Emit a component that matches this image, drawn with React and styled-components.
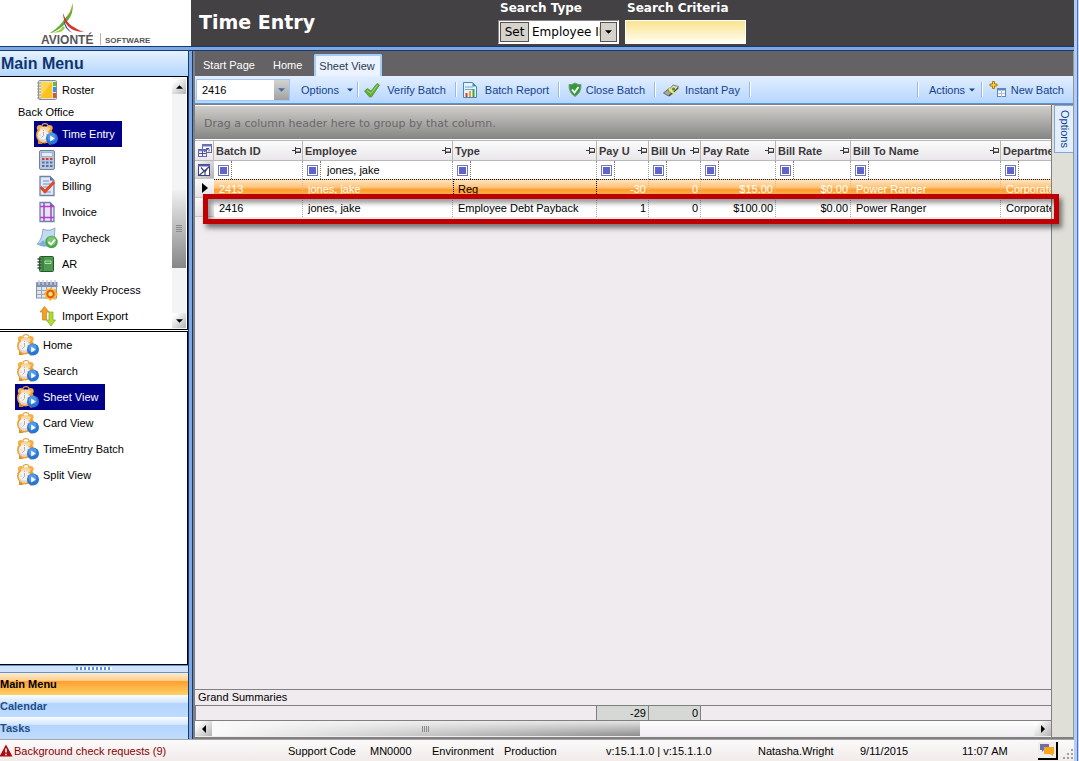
import React from "react";
import styled, { createGlobalStyle, css } from "styled-components";

const sans = '"Liberation Sans", Arial, sans-serif';
const wide = '"DejaVu Sans", Verdana, sans-serif';

const Global = createGlobalStyle`
  * { box-sizing: border-box; }
  body { margin: 0; background: #ffffff; font: 11px/14px ${sans}; color: #000000; }
  button, input, select { font: inherit; color: inherit; margin: 0; padding: 0; border: 0; background: none; border-radius: 0; }
  button { cursor: pointer; white-space: nowrap; }
  svg { display: block; flex: none; }
`;

/* ---------- window ---------- */
const Window = styled.div`
  display: flex;
  flex-direction: column;
  min-height: 100vh;
  border-right: 1px solid #c9d6ea;
`;
const Frame = styled.div`
  flex: 1;
  display: flex;
  flex-direction: column;
  border-right: 1px solid #4a76b8;
`;
const Inner = styled.div`
  flex: 1;
  display: flex;
  flex-direction: column;
  min-width: 0;
  border-right: 3px solid #b1ccf6;
`;
const Header = styled.header`
  display: flex;
  height: 46px;
  background: #434143;
`;
const LogoBox = styled.div`
  width: 191px;
  flex: none;
  background: #ffffff;
  padding-left: 38px;
`;
const Title = styled.h1`
  width: 307px;
  flex: none;
  margin: 0;
  padding: 9px 0 0 8px;
  font: bold 19px/26px ${wide};
  color: #ffffff;
`;
const SearchGroup = styled.div`
  width: ${(p) => p.$w}px;
  margin-right: 6px;
  color: #ffffff;
  font: bold 12px/16px ${wide};
`;
const SearchLabel = styled.label`
  display: block;
  padding-left: 2px;
  height: 20px;
`;
const TypeBox = styled.div`
  position: relative;
  display: flex;
  height: 24px;
  padding: 1px;
  border: 1px solid #8a8886;
  border-right-color: #ffffff;
  border-bottom-color: #ffffff;
  background: #ffffff;
  font: 12px/18px ${wide};
  color: #000000;
`;
const SetButton = styled.button`
  width: 29px;
  flex: none;
  background: #d6d2cc;
  border: 1px solid #56534f;
`;
const TypeSelect = styled.select`
  appearance: none;
  flex: none;
  width: 71px;
  padding-left: 3px;
  overflow: hidden;
  text-overflow: clip;
`;
const DropFace = styled.span`
  display: flex;
  flex: 1;
  align-items: center;
  justify-content: center;
  background: #d6d2cc;
  border: 1px solid #56534f;
`;
const Criteria = styled.input`
  display: block;
  width: 100%;
  height: 24px;
  padding: 0 4px;
  border: 1px solid #ffffff;
  background: linear-gradient(#f9e48f, #fffdf2);
`;
const BlueBar = styled.div`
  height: 5px;
  background: #7fa8e2;
  border-top: 1px solid #153a78;
  border-bottom: 1px solid #153a78;
`;
const Body = styled.div`
  flex: 1;
  display: flex;
  min-width: 0;
`;
const VBar = styled.div`
  width: 5px;
  flex: none;
  background: #7fa8e2;
  border-left: 1px solid #153a78;
  border-right: 1px solid #153a78;
`;

/* ---------- sidebar ---------- */
const Side = styled.aside`
  width: 188px;
  flex: none;
  display: flex;
  flex-direction: column;
`;
const SideTitle = styled.h2`
  margin: 0;
  height: 25px;
  font: bold 16px/25px ${sans};
  color: #0f3470;
  padding-left: 1px;
  background: linear-gradient(#e6f1ff, #b4d6fd);
`;
const TreeBox = styled.div`
  display: flex;
  height: 254px;
  border: 1px solid #000;
  border-left: 0;
`;
const TreeList = styled.div`
  flex: 1;
  display: flex;
  flex-direction: column;
  align-items: flex-start;
  padding-left: ${(p) => p.$indent}px;
`;
const GroupLabel = styled.div`
  height: 18px;
  line-height: 18px;
  margin-left: -16px;
`;
const NavItem = styled.button`
  display: flex;
  align-items: center;
  gap: 4px;
  height: 26px;
  padding: 0 7px 0 2px;
  ${(p) =>
    p.$active &&
    css`
      background: #00008b;
      color: #ffffff;
    `}
`;
const VScroll = styled.div`
  width: 14px;
  flex: none;
  margin-right: 1px;
  display: flex;
  flex-direction: column;
  padding: 2px 0 1px;
  background: #f5f4f5;
`;
const ScrollButton = styled.button`
  display: flex;
  align-items: center;
  justify-content: center;
  width: ${(p) => p.$w}px;
  height: 15px;
  flex: none;
  background: linear-gradient(135deg, #ffffff 15%, #b4b4b4);
`;
const VThumb = styled.div`
  margin: 96px 0 auto;
  height: 78px;
  display: flex;
  align-items: center;
  justify-content: center;
  background: linear-gradient(#f0f0f0, #868686);
`;
const ViewBox = styled.div`
  flex: 1;
  margin-top: 1px;
  border: 1px solid #000;
  border-left: 0;
`;
const Splitter = styled.div`
  height: 8px;
  border-top: 1px solid #5b92d8;
  border-bottom: 1px solid #5b92d8;
  background: #cfe3fc;
  display: flex;
  justify-content: center;
  padding-top: 1px;
`;
const Dots = styled.span`
  width: 36px;
  height: 3px;
  background: repeating-linear-gradient(90deg, #5b92d8 0 2px, #ffffff 2px 4px);
`;
const PanelButton = styled.button`
  height: 22px;
  text-align: left;
  font-weight: bold;
  line-height: 22px;
  color: ${(p) => (p.$active ? "#000000" : "#204d89")};
  background: ${(p) =>
    p.$active
      ? "linear-gradient(#ffeccb, #ffce8f 34%, #ff9f2e 36%, #ffd068)"
      : "linear-gradient(#fafdff, #d3e6ff 34%, #b4d4fd 36%, #bfdcff)"};
`;

/* ---------- main area ---------- */
const Main = styled.main`
  flex: 1;
  min-width: 0;
  display: flex;
  flex-direction: column;
  border-left: 2px solid #808080;
  border-right: 1px solid #98968f;
  border-bottom: 2px solid #808080;
`;
const Tabs = styled.nav`
  display: flex;
  align-items: flex-end;
  height: 25px;
  padding-left: 1px;
  background: #646264;
`;
const Tab = styled.button`
  height: 22px;
  padding: 0 ${(p) => p.$r}px 0 ${(p) => p.$l}px;
  color: #ffffff;
  ${(p) =>
    p.$active &&
    css`
      background: #eaf3ff;
      border: 2px solid #a5cbf9;
      border-bottom: 0;
      border-radius: 2px 2px 0 0;
      color: #2b3950;
    `}
`;
const Toolbar = styled.div`
  display: flex;
  align-items: center;
  height: 28px;
  padding-left: 1px;
  border-bottom: 1px solid #5b92d8;
  background: linear-gradient(#e2eeff, #b6d6ff);
`;
const Combo = styled.div`
  width: 94px;
  height: 22px;
  display: flex;
  border: 1px solid #a3c5f3;
  background: #ffffff;
`;
const ComboSelect = styled.select`
  appearance: none;
  flex: 1;
  min-width: 0;
  padding-left: 5px;
`;
const ComboArrow = styled.span`
  width: 15px;
  display: flex;
  align-items: center;
  justify-content: center;
  background: linear-gradient(#d3d3d3, #a2a2a2);
`;
const Tool = styled.button`
  display: flex;
  align-items: center;
  justify-content: space-between;
  width: ${(p) => p.$w}px;
  padding: 0 ${(p) => p.$pr || 9}px 0 ${(p) => p.$pl || 5}px;
  height: 24px;
  flex: none;
  color: #15428b;
`;
const Sep = styled.span`
  width: 2px;
  height: 15px;
  flex: none;
  border-left: 1px solid #95b9ea;
  border-right: 1px solid #ffffff;
  ${(p) => p.$push && "margin-left: auto;"}
`;
const Work = styled.div`
  flex: 1;
  display: flex;
  min-width: 0;
  background: #dfdfd8;
  border-top: 1px solid #808080;
`;
const GridPane = styled.section`
  position: relative;
  flex: 1;
  min-width: 0;
  display: flex;
  flex-direction: column;
  border-right: 1px solid #808080;
  background: #efebef;
`;
const GroupBy = styled.div`
  height: 35px;
  padding-left: 9px;
  border-top: 1px solid #ffffff;
  border-bottom: 1px solid #ffffff;
  font: 11px/36px ${wide};
  color: #6a6868;
  background: linear-gradient(#d0ceca, #858585);
`;
const TableClip = styled.div`
  flex: 1;
  overflow: hidden;
`;
const Table = styled.table`
  table-layout: fixed;
  width: 901px;
  border-collapse: separate;
  border-spacing: 0;
`;
const Th = styled.th`
  height: 21px;
  padding: 0 1px 0 2px;
  text-align: left;
  white-space: nowrap;
  overflow: hidden;
  color: #3d3a3d;
  border-top: 1px solid #b9b7b9;
  border-right: 1px solid #b9b7b9;
  border-bottom: 1px solid #b9b7b9;
  background: linear-gradient(#fbfbfb, #e9e7ea);
`;
const ThInner = styled.span`
  display: flex;
  align-items: center;
  justify-content: space-between;
`;
const Corner = styled.td`
  height: ${(p) => (p.$dark ? 18 : 19)}px;
  padding: 0 0 0 2px;
  background: ${(p) =>
    p.$dark ? "linear-gradient(135deg, #fbfbfb, #b4b2b6)" : "linear-gradient(#fbfbfb, #e4e2e5)"};
  border-bottom: 1px solid #c9c7c9;
`;
const FilterTd = styled.td`
  height: 18px;
  padding: 0;
  background: #ffffff;
  border-right: 1px dotted #9a9a9a;
`;
const FilterInner = styled.div`
  display: flex;
  align-items: center;
`;
const FilterButton = styled.button`
  width: 11px;
  height: 11px;
  margin: 0 2px 0 4px;
  flex: none;
  background: #5f63cf;
  border: 1px solid #7478ac;
  box-shadow: inset 0 0 0 1px #ffffff;
`;
const FilterInput = styled.input`
  flex: 1;
  min-width: 0;
  width: 10px;
  height: 18px;
  padding-left: 6px;
  border-left: 1px dotted #777777;
  white-space: nowrap;
`;
const Td = styled.td`
  height: 19px;
  padding: 0 ${(p) => (p.$num ? 2 : 5)}px;
  line-height: 14px;
  text-align: ${(p) => (p.$num ? "right" : "left")};
  white-space: nowrap;
  overflow: hidden;
  border-right: 1px dotted ${(p) => (p.$hot ? "#d8b98c" : "#a9a9a9")};
  color: ${(p) => (p.$hot && !p.$focus ? "#ffffff" : "#000000")};
  background: ${(p) =>
    p.$hot ? "linear-gradient(#ffe4bd, #ffc57c 40%, #ff9b2a 55%, #ffcb70)" : "#ffffff"};
  border-top: 1px dotted ${(p) => (p.$hot ? "#1b1b60" : "#c9c9c9")};
  outline: ${(p) => (p.$focus ? "1px dotted #000000" : "none")};
  outline-offset: -1px;
`;
const MarkerBox = styled.span`
  display: flex;
  padding-left: 5px;
`;
const Callout = styled.div`
  position: absolute;
  top: 89px;
  left: 8px;
  right: -8px;
  height: 30px;
  border: 5px solid #c00000;
  box-shadow: 3px 4px 5px rgba(0, 0, 0, 0.5), inset 3px 4px 5px rgba(0, 0, 0, 0.4);
  pointer-events: none;
`;
const SummaryTitle = styled.div`
  height: 17px;
  padding-left: 3px;
  line-height: 15px;
  border-top: 1px solid #808080;
  border-bottom: 1px solid #808080;
`;
const Summary = styled.div`
  display: flex;
  height: 15px;
  padding-left: 401px;
  border-bottom: 1px solid #808080;
  border-left: 1px solid #808080;
`;
const SumCell = styled.output`
  width: 52px;
  padding-right: 2px;
  text-align: right;
  background: #d5d8d5;
  border-right: 1px solid #808080;
  &:first-child { border-left: 1px solid #808080; width: 53px; margin-left: -1px; }
`;
const HScroll = styled.div`
  display: flex;
  height: 16px;
  padding-bottom: 1px;
  background: linear-gradient(#fdfdfd, #efedef);
`;
const HThumb = styled.div`
  width: 50%;
  display: flex;
  align-items: center;
  justify-content: center;
  margin-right: auto;
  background: linear-gradient(90deg, #fafafa, rgba(250, 250, 250, 0)), linear-gradient(#e4e4e4, #8c8c8c);
`;
const RightRail = styled.div`
  width: 21px;
  flex: none;
  padding-left: 2px;
`;
const RailTab = styled.button`
  width: 19px;
  height: 48px;
  writing-mode: vertical-rl;
  line-height: 17px;
  color: #15428b;
  background: #e3efff;
  border: 1px solid #7fa8e2;
  border-right: 0;
`;

/* ---------- status bar ---------- */
const Status = styled.footer`
  display: grid;
  grid-template-columns: 288fr 82fr 62fr 72fr 102fr 152fr 102fr 102fr 76fr 36px;
  align-items: center;
  height: 22px;
  border-top: 1px solid #a8a4a4;
  background: linear-gradient(#fbfafa, #f1ebea);
  white-space: nowrap;
`;
const Alert = styled.a`
  display: flex;
  align-items: center;
  gap: 1px;
  color: #8b0000;
  text-decoration: none;
`;
const Tray = styled.span`
  display: flex;
  align-items: flex-end;
  gap: 5px;
`;
const ChatButton = styled.button`
  width: 20px;
  height: 18px;
  padding-left: 1px;
  background: #f0ecea;
  border-right: 2px solid #000;
  border-bottom: 2px solid #000;
`;

/* ---------- drawings ---------- */
const Svg = ({ s = 20, h, v, children }) => (
  <svg width={s} height={h || s} viewBox={v || `0 0 ${s} ${h || s}`} aria-hidden="true">
    {children}
  </svg>
);
const Clock = () => (
  <Svg s={22}>
    <path d="M6 2.500C6.500 0 11.500 0 12 2.500" fill="none" stroke="#e0a54c" strokeWidth="1.300" />
    <ellipse cx="4" cy="5" rx="3.200" ry="3" fill="#f5b04a" />
    <ellipse cx="13.500" cy="5" rx="3.200" ry="3" fill="#f5b04a" />
    <path d="M2 17l0 4 5 0zM12 20l2 2 2-2z" fill="#dc8c22" />
    <ellipse cx="8.500" cy="12" rx="8.500" ry="8.500" fill="#f0a02f" />
    <path d="M3.500 5q5-3 10.500 0l-1 3h-8.500z" fill="#fbd79c" />
    <ellipse cx="7.500" cy="12.500" rx="6" ry="6.500" fill="#dedad3" />
    <ellipse cx="7" cy="11.500" rx="4.800" ry="5" fill="#f4f2ef" />
    <path d="M7.500 9v3.500l-2 2M7.500 7v1M3.500 12h1M10 12h1" fill="none" stroke="#b0a79c" strokeWidth="0.900" />
    <circle cx="16" cy="15.500" r="6" fill="#2a74d6" />
    <circle cx="15.500" cy="14" r="4" fill="#62a9f4" opacity="0.700" />
    <path d="M14.200 12.600v6l4.500-3z" fill="#ffffff" />
  </Svg>
);
const Roster = () => (
  <Svg s={22}>
    <rect x="2.500" y="1.500" width="18" height="19" rx="1" fill="#e2e2e2" stroke="#8c8c8c" />
    <rect x="5" y="3" width="11" height="16" fill="#ffc21c" />
    <path d="M5 3h11l-11 14z" fill="#ffe06a" opacity="0.700" />
    <rect x="17" y="3" width="3" height="4" fill="#6dbb3c" />
    <rect x="17" y="8" width="3" height="5" fill="#3d8fe0" />
    <rect x="17" y="14" width="3" height="5" fill="#e0552f" />
    <path d="M1 4h4M1 7h4M1 10h4M1 13h4M1 16h4M1 19h4" stroke="#999" />
  </Svg>
);
const Calc = () => (
  <Svg s={22}>
    <rect x="3.500" y="1.500" width="15" height="19" rx="1.500" fill="#b9c6dc" stroke="#6f80a5" />
    <rect x="5.500" y="3.500" width="11" height="4" fill="#dff0fb" stroke="#8795b4" strokeWidth="0.600" />
    <path d="M6 10h2.500M10 10h2.500M14 10h2.500" stroke="#d33a35" strokeWidth="2" />
    <path d="M6 13.500h2.500M10 13.500h2.500M14 13.500h2.500M6 17h2.500M10 17h2.500M14 17h2.500" stroke="#536fb0" strokeWidth="2" />
  </Svg>
);
const Page = ({ children }) => (
  <Svg s={22}>
    <path d="M4 1.500h10l4 4v15H4z" fill="#dfe8f8" stroke="#6f82a8" strokeWidth="1.300" />
    <path d="M14 1.500v4h4z" fill="#5a74a6" />
    {children}
  </Svg>
);
const Billing = () => (
  <Page>
    <path d="M7 6h6M7 9h8M7 12h8M7 17h8" stroke="#7890bb" />
    <path d="M4.500 12l4.500 4.500 9-9.500" fill="none" stroke="#e04a22" strokeWidth="3" />
  </Page>
);
const Invoice = () => (
  <Page>
    <path d="M8 2v18M15 4v16M4 5.500h14M4 16.500h14" fill="none" stroke="#b43cc0" strokeWidth="1.500" />
  </Page>
);
const Paycheck = () => (
  <Svg s={22}>
    <path d="M7 2q6 3 12-1l-1 13q-8 6-17 3q5-4 6-15z" fill="#bfdcf2" stroke="#7d9ab8" strokeWidth="0.800" />
    <path d="M1 17q4-1 6-4l6 6q-7 2-12-2z" fill="#7fb0dd" />
    <circle cx="15.500" cy="15" r="6.200" fill="#4ba546" />
    <circle cx="15.500" cy="14" r="4.500" fill="#7cc56f" />
    <path d="M12.500 15l2.500 2.500 4-5" fill="none" stroke="#fff" strokeWidth="1.800" />
  </Svg>
);
const Book = () => (
  <Svg s={22}>
    <rect x="3.500" y="3.500" width="14" height="15" rx="1" fill="#4d9a50" stroke="#225a28" />
    <path d="M9 8h6v2.500H9z" fill="none" stroke="#b6deae" />
    <path d="M1.500 6h4M1.500 9h4M1.500 12h4M1.500 15h4" stroke="#444" strokeWidth="1.300" />
    <path d="M7 4v14" stroke="#2b6a31" />
  </Svg>
);
const Calendar = () => (
  <Svg s={22}>
    <rect x="0.500" y="4" width="20" height="15" fill="#dfe4ee" stroke="#8492ad" />
    <rect x="0.500" y="3" width="21" height="5" fill="#8291b2" />
    <path d="M3 1v5M7 1v5M11 1v5M15 1v5M19 1v5" stroke="#c8d0e0" strokeWidth="1.400" />
    <path d="M1 11.500h19M1 15.500h19M5.500 8v11M10.500 8v11M15.500 8v11" stroke="#9aa6c0" />
    <path d="M15 8l2 2.500 3.500-0.500-0.500 3.500 2 2-2.500 2 0 3.500-3-1-2.500 2-2-2.500-3 0.500 0.500-3.500-2-2 2.500-2 0-3 3 0.500z" fill="#f9b529" />
    <circle cx="14.500" cy="15" r="3.200" fill="#fbe26b" stroke="#e4591c" strokeWidth="2" />
  </Svg>
);
const Swap = () => (
  <Svg s={22}>
    <path d="M8.500 1.500L13 7h-2.500v8h-4V7H4z" fill="#f2a127" stroke="#cf7d12" strokeWidth="0.700" />
    <path d="M15 21l4.500-6H17V7h-4v8h-2.500z" fill="#b4d93a" stroke="#7ba61f" strokeWidth="0.700" />
  </Svg>
);
const Tri = ({ d = "down", c = "#000", w = 7 }) => (
  <svg
    width={d === "down" || d === "up" ? w : 4}
    height={d === "down" || d === "up" ? 4 : 8}
    viewBox={d === "down" || d === "up" ? "0 0 8 4" : "0 0 4 8"}
    aria-hidden="true"
  >
    <path d={{ down: "M0 0h8l-4 4z", up: "M0 4h8l-4-4z", left: "M4 0v8l-4-4z", right: "M0 0v8l4-4z" }[d]} fill={c} />
  </svg>
);
const Pin = () => (
  <Svg s={9} h={9}>
    <path d="M0 4.500h3M3.500 1v7M3.500 2.500h5v4h-5" fill="none" stroke="#3d3a3d" />
    <path d="M4 6h5" stroke="#3d3a3d" />
  </Svg>
);
const Check = () => (
  <Svg s={16}>
    <path d="M0.500 9l3-2.500 3.500 2.500 6-7.500 2.500 1.500-8 12h-2z" fill="#5fae33" stroke="#4a8f2a" strokeWidth="0.700" />
    <path d="M3 8.500l4 3 6.500-8.500" fill="none" stroke="#a5dc6e" />
  </Svg>
);
const Report = () => (
  <Svg s={16}>
    <path d="M1.500 0.500h9l4 4v11h-13z" fill="#e4f4ff" stroke="#4d84b8" />
    <path d="M10.500 0.500v4h4z" fill="#4d84b8" />
    <path d="M3 5h8M3 7.500h9" stroke="#6aa5d6" />
    <path d="M4.500 15v-4" stroke="#df3b28" strokeWidth="2" />
    <path d="M8 15v-6" stroke="#f0a221" strokeWidth="2" />
    <path d="M11.500 15v-8" stroke="#41a33c" strokeWidth="2" />
  </Svg>
);
const Shield = () => (
  <Svg s={14} h={15}>
    <path d="M7 1q3 2 6 1.500q0.500 8-6 12q-6.500-4-6-12q3 0.500 6-1.500z" fill="#2f9b3c" stroke="#7f9a80" />
    <path d="M4 7.500l2.500 3 4-5.500" fill="none" stroke="#fff" strokeWidth="1.800" />
  </Svg>
);
const Money = () => (
  <Svg s={16}>
    <path d="M0.500 11l6-5 3 4-4 4z" fill="#a9a99a" stroke="#57584a" strokeWidth="0.800" />
    <path d="M5 9l5-6 5.500 1.500-6 7.500z" fill="#d5dcb4" stroke="#6c7355" strokeWidth="0.800" />
    <path d="M5.500 13.500l10-8.500v1.500l-9 8z" fill="#4c5340" />
    <path d="M6 6.500l5 5" stroke="#e5f04e" strokeWidth="2" />
    <circle cx="10.500" cy="7" r="1.600" fill="#5b8a36" />
  </Svg>
);
const NewIcon = () => (
  <Svg s={17}>
    <rect x="8.500" y="7.500" width="8" height="8" fill="#fff" stroke="#5d86c4" />
    <path d="M8 8.500h9" stroke="#5d86c4" strokeWidth="2" />
    <path d="M9 12.500h7M12.500 10v6" stroke="#a9c1e4" />
    <path d="M3.500 0.500h2v2.500h2.500v2h-2.500v2.500h-2v-2.500h-2.500v-2h2.500z" fill="#ffd43a" stroke="#ae7c0d" />
  </Svg>
);
const Chooser = () => (
  <Svg s={15} h={15}>
    <rect x="5.500" y="1.500" width="9" height="8" fill="#fff" stroke="#6266a8" />
    <path d="M5 2.500h10" stroke="#6c70bd" strokeWidth="2" />
    <rect x="1.500" y="6.500" width="8" height="7" fill="#f0f0fb" stroke="#6266a8" />
    <path d="M1 7.500h9" stroke="#6c70bd" strokeWidth="1.500" />
    <path d="M2 10.500h7M5.500 8v5M7 9l4-3M12 8.500V5.500H9" fill="none" stroke="#4b4f96" />
  </Svg>
);
const FilterIcon = () => (
  <Svg s={14} h={14}>
    <rect x="1.500" y="1.500" width="11" height="11" fill="#fff" stroke="#3b3f7c" />
    <path d="M1 2.500h12" stroke="#5a5ea8" strokeWidth="2" />
    <path d="M2 12.500l10.500-9M4 4.500l3 3.500M10 6l-2 3v3" fill="none" stroke="#3b3f7c" strokeWidth="1.200" />
  </Svg>
);
const Warn = () => (
  <Svg s={13} h={13}>
    <path d="M6 0.500L12.500 12.500h-13z" fill="#a80d12" />
    <path d="M6 4.500v4M6 9.800v1.500" stroke="#fff" strokeWidth="1.500" />
  </Svg>
);
const LogoText = styled.text`
  font: bold ${(p) => p.$size}px ${sans};
  fill: #57555a;
`;
const Logo = () => (
  <svg width="120" height="46" viewBox="0 0 120 46" role="img" aria-label="Avionté Software">
    <path d="M34.500 3q1.500 10-5 18q-5 7-16 12q-2 0 0-1q9-6 13-13q7-7 8-16z" fill="#5cad3c" />
    <path d="M34.500 3q0 7-4 12l-2 2q5-6 6-14z" fill="#f0b32b" />
    <path d="M25 13q3 9 9 13q6 4 12 6q-12 0-17-7q-4-5-4-12z" fill="#d8352c" />
    <path d="M26 20q2 9 9 13q-9-3-9-13z" fill="#25407e" />
    <path d="M14 32q8 0 11-6l2 2q-4 6-13 4z" fill="#a6c63b" />
    <LogoText x="3" y="44" $size={12}>AVIONTÉ</LogoText>
    <path d="M62.500 33v12" stroke="#b5b3b6" />
    <LogoText x="67" y="43" $size={8}>SOFTWARE</LogoText>
  </svg>
);
const Chat = () => (
  <Svg s={16} h={15}>
    <path d="M1 2h9v6h-5l-2 2v-2h-2z" fill="#6d6ea8" />
    <path d="M5 5h10v7h-1v2l-3-2h-6z" fill="#f8a51b" />
  </Svg>
);
const Grip = () => (
  <Svg s={11} h={11}>
    <path d="M8 1h2M8 5h2M8 9h2M4 5h2M4 9h2M0 9h2" stroke="#a39f9f" strokeWidth="2" />
  </Svg>
);
const Marker = () => (
  <MarkerBox>
    <Svg s={6} h={10}>
      <path d="M0 0v10l6-5z" fill="#000" />
    </Svg>
  </MarkerBox>
);

/* ---------- data ---------- */
const tree = [
  ["Time Entry", Clock],
  ["Payroll", Calc],
  ["Billing", Billing],
  ["Invoice", Invoice],
  ["Paycheck", Paycheck],
  ["AR", Book],
  ["Weekly Process", Calendar],
  ["Import Export", Swap],
];
const views = ["Home", "Search", "Sheet View", "Card View", "TimeEntry Batch", "Split View"];
const columns = [
  ["Batch ID", 89],
  ["Employee", 150],
  ["Type", 144],
  ["Pay U", 52],
  ["Bill Un", 52],
  ["Pay Rate", 75],
  ["Bill Rate", 75],
  ["Bill To Name", 150],
  ["Department", 95],
];
const rows = [
  ["2413", "jones, jake", "Reg", "-30", "0", "$15.00", "$0.00", "Power Ranger", "Corporate"],
  ["2416", "jones, jake", "Employee Debt Payback", "1", "0", "$100.00", "$0.00", "Power Ranger", "Corporate"],
];

export default function App() {
  return (
    <Window>
      <Global />
      <Frame>
        <Inner>
          <Header>
            <LogoBox>
              <Logo />
            </LogoBox>
            <Title>Time Entry</Title>
            <SearchGroup $w={121}>
              <SearchLabel htmlFor="stype">Search Type</SearchLabel>
              <TypeBox>
                <SetButton type="button">Set</SetButton>
                <TypeSelect id="stype">
                  <option>Employee ID</option>
                </TypeSelect>
                <DropFace>
                  <Tri />
                </DropFace>
              </TypeBox>
            </SearchGroup>
            <SearchGroup $w={121}>
              <SearchLabel htmlFor="scrit">Search Criteria</SearchLabel>
              <Criteria id="scrit" />
            </SearchGroup>
          </Header>
          <BlueBar />
          <Body>
            <Side>
              <SideTitle>Main Menu</SideTitle>
              <TreeBox>
                <TreeList $indent={34}>
                  <NavItem>
                    <Roster />
                    Roster
                  </NavItem>
                  <GroupLabel>Back Office</GroupLabel>
                  {tree.map(([name, Icon], i) => (
                    <NavItem key={name} $active={i === 0}>
                      <Icon />
                      {name}
                    </NavItem>
                  ))}
                </TreeList>
                <VScroll>
                  <ScrollButton $w={14} aria-label="Scroll up">
                    <Tri d="up" />
                  </ScrollButton>
                  <VThumb>
                    <Svg s={6} h={8}>
                      <path d="M0 0.500h6M0 2.500h6M0 4.500h6M0 6.500h6" stroke="#8a8a8a" />
                    </Svg>
                  </VThumb>
                  <ScrollButton $w={14} aria-label="Scroll down">
                    <Tri />
                  </ScrollButton>
                </VScroll>
              </TreeBox>
              <ViewBox>
                <TreeList $indent={15}>
                  {views.map((name) => (
                    <NavItem key={name} $active={name === "Sheet View"}>
                      <Clock />
                      {name}
                    </NavItem>
                  ))}
                </TreeList>
              </ViewBox>
              <Splitter>
                <Dots />
              </Splitter>
              <PanelButton $active>Main Menu</PanelButton>
              <PanelButton>Calendar</PanelButton>
              <PanelButton>Tasks</PanelButton>
            </Side>
            <VBar />
            <Main>
              <Tabs>
                <Tab $l={7} $r={9}>Start Page</Tab>
                <Tab $l={9} $r={12}>Home</Tab>
                <Tab $l={3} $r={5} $active>
                  Sheet View
                </Tab>
              </Tabs>
              <Toolbar>
                <Combo>
                  <ComboSelect aria-label="Batch">
                    <option>2416</option>
                  </ComboSelect>
                  <ComboArrow>
                    <Tri c="#3c6ea8" />
                  </ComboArrow>
                </Combo>
                <Tool $w={67} $pl={11} $pr={4}>
                  Options <Tri c="#15428b" w={6} />
                </Tool>
                <Sep />
                <Tool $w={96}>
                  <Check />
                  Verify Batch
                </Tool>
                <Sep />
                <Tool $w={101}>
                  <Report />
                  Batch Report
                </Tool>
                <Sep />
                <Tool $w={94} $pl={8}>
                  <Shield />
                  Close Batch
                </Tool>
                <Sep />
                <Tool $w={93} $pl={7}>
                  <Money />
                  Instant Pay
                </Tool>
                <Sep />
                <Sep $push />
                <Tool $w={62} $pl={10} $pr={6}>
                  Actions <Tri c="#15428b" w={6} />
                </Tool>
                <Sep />
                <Tool $w={90} $pl={6}>
                  <NewIcon />
                  New Batch
                </Tool>
              </Toolbar>
              <Work>
                <GridPane>
                  <GroupBy>Drag a column header here to group by that column.</GroupBy>
                  <TableClip>
                    <Table>
                      <colgroup>
                        <col style={{ width: 19 }} />
                        {columns.map(([name, w]) => (
                          <col key={name} style={{ width: w }} />
                        ))}
                      </colgroup>
                      <thead>
                        <tr>
                          <Th aria-label="Column chooser">
                            <Chooser />
                          </Th>
                          {columns.map(([name]) => (
                            <Th key={name}>
                              <ThInner>
                                {name}
                                <Pin />
                              </ThInner>
                            </Th>
                          ))}
                        </tr>
                      </thead>
                      <tbody>
                        <tr>
                          <Corner $dark>
                            <FilterIcon />
                          </Corner>
                          {columns.map(([name]) => (
                            <FilterTd key={name}>
                              <FilterInner>
                                <FilterButton aria-label={`${name} operator`} />
                                <FilterInput
                                  aria-label={`${name} filter`}
                                  defaultValue={name === "Employee" ? "jones, jake" : ""}
                                />
                              </FilterInner>
                            </FilterTd>
                          ))}
                        </tr>
                        {rows.map((row, r) => (
                          <tr key={row[0]}>
                            <Corner>{r === 0 && <Marker />}</Corner>
                            {row.map((cell, c) => (
                              <Td key={c} $hot={r === 0} $focus={r === 0 && c === 2} $num={c > 2 && c < 7}>
                                {cell}
                              </Td>
                            ))}
                          </tr>
                        ))}
                      </tbody>
                    </Table>
                  </TableClip>
                  <SummaryTitle>Grand Summaries</SummaryTitle>
                  <Summary>
                    <SumCell>-29</SumCell>
                    <SumCell>0</SumCell>
                  </Summary>
                  <HScroll>
                    <ScrollButton $w={17} aria-label="Scroll left">
                      <Tri d="left" />
                    </ScrollButton>
                    <HThumb>
                      <Svg s={8} h={6}>
                        <path d="M0.500 0v6M2.500 0v6M4.500 0v6M6.500 0v6" stroke="#8a8a8a" />
                      </Svg>
                    </HThumb>
                    <ScrollButton $w={17} aria-label="Scroll right">
                      <Tri d="right" />
                    </ScrollButton>
                  </HScroll>
                  <Callout />
                </GridPane>
                <RightRail>
                  <RailTab>Options</RailTab>
                </RightRail>
              </Work>
            </Main>
          </Body>
          <Status>
            <Alert href="#requests">
              <Warn />
              Background check requests (9)
            </Alert>
            <span>Support Code</span>
            <span>MN0000</span>
            <span>Environment</span>
            <span>Production</span>
            <span>v:15.1.1.0 | v:15.1.1.0</span>
            <span>Natasha.Wright</span>
            <span>9/11/2015</span>
            <span>11:07 AM</span>
            <Tray>
              <ChatButton aria-label="Messages">
                <Chat />
              </ChatButton>
              <Grip />
            </Tray>
          </Status>
        </Inner>
      </Frame>
    </Window>
  );
}
